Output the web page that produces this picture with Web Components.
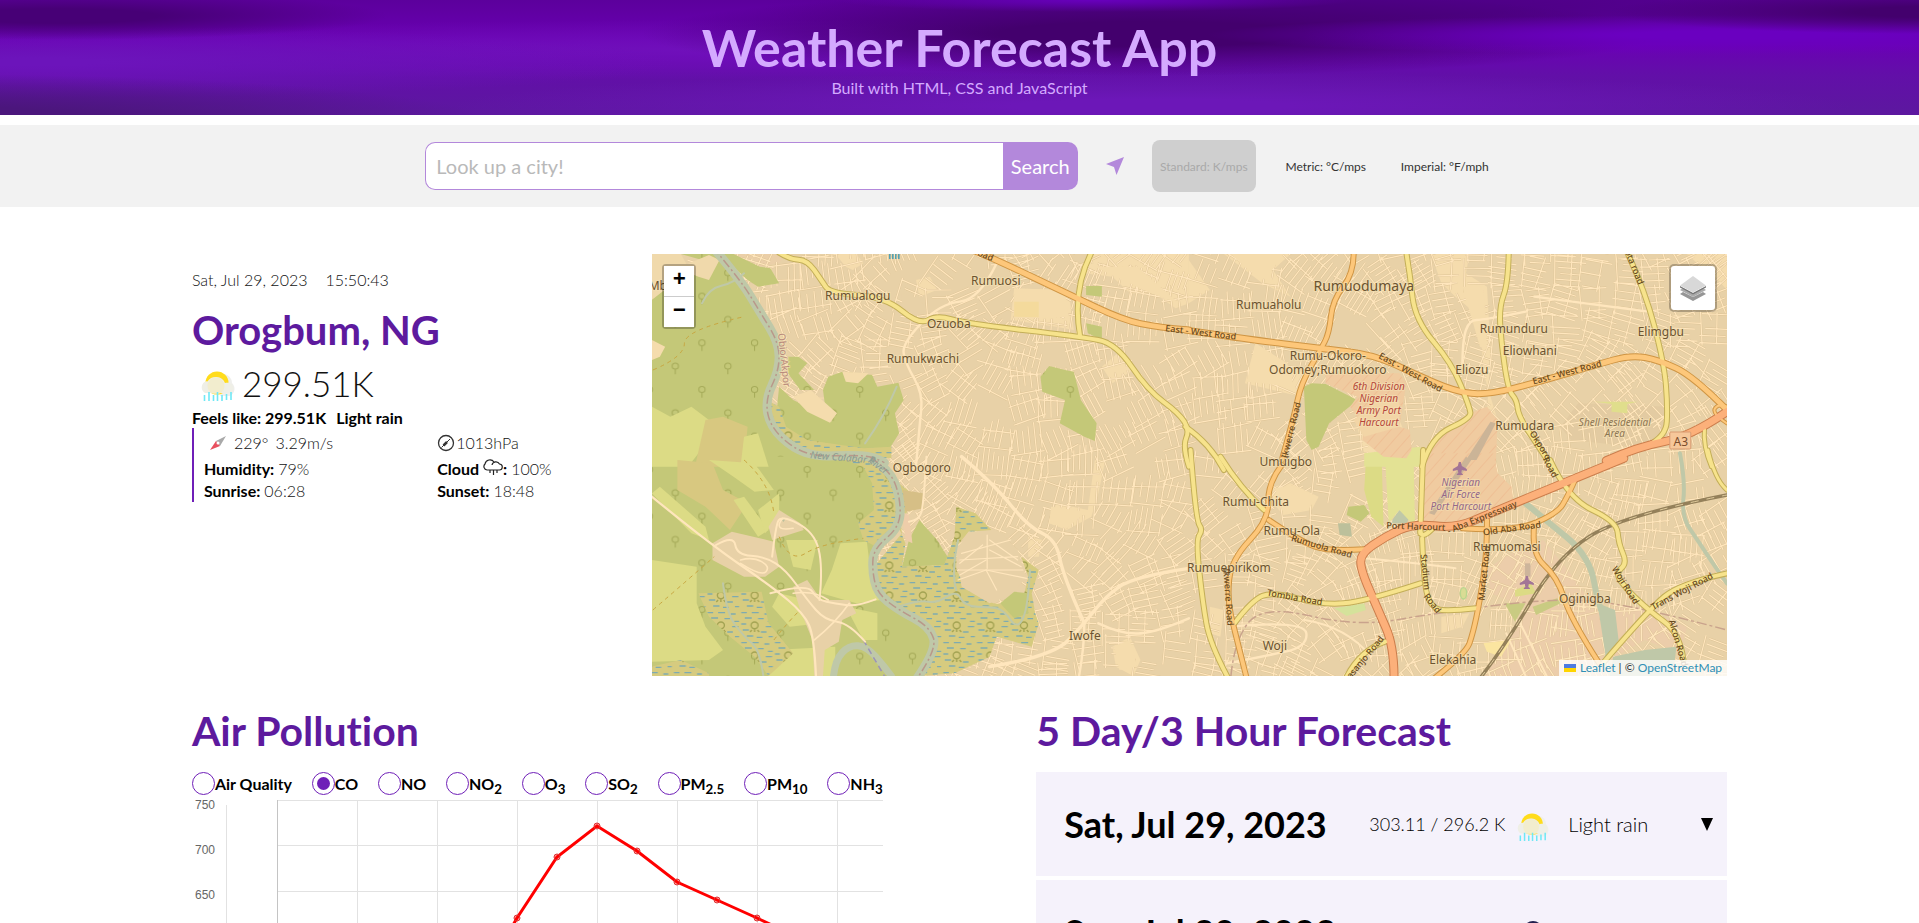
<!DOCTYPE html>
<html lang="en">
<head>
<meta charset="utf-8">
<title>Weather Forecast App</title>
<style>
  html, body { margin: 0; }
  body { font-family: Lato, "Open Sans", sans-serif; font-size: 16px; line-height: 20px; font-variant-ligatures: none; color: #000; background: #fff; }
</style>
</head>
<body>
<weather-app></weather-app>

<script>
const define = (name, html, setup) => {
  const template = document.createElement('template');
  template.innerHTML = html;
  customElements.define(name, class extends HTMLElement {
    constructor() {
      super();
      this.attachShadow({ mode: 'open' }).appendChild(template.content.cloneNode(true));
      if (setup) setup(this.shadowRoot, this);
    }
  });
};

/* ---------- header ---------- */
define('app-header', `
<style>
  :host {
    display: block; text-align: center; padding: 16px 0 17px; color: #d4aaff;
    background:
      radial-gradient(330px 24px at 3% 16px, #470076 30%, transparent),
      radial-gradient(560px 46px at -4% 120px, #4b167c 30%, transparent),
      radial-gradient(260px 12px at 57% 0px, #6800bd, transparent),
      radial-gradient(330px 22px at 101% 12px, #43006d 25%, transparent),
      radial-gradient(520px 20px at 90% 35px, #6a00c0 20%, transparent),
      radial-gradient(510px 42px at 60% 34px, #43006d 30%, transparent),
      radial-gradient(620px 40px at 72% 8px, #4e0086 20%, transparent),
      radial-gradient(640px 36px at 2% 62px, #6c14bb 10%, transparent),
      radial-gradient(800px 30px at 38% 50px, #7010bb, transparent),
      radial-gradient(700px 34px at 60% 106px, #6c17b8 20%, transparent),
      linear-gradient(#5c009c, #6a00b4 38%, #620fa8 65%, #5c189f);
  }
  h1 { margin: 0; font-size: 52px; line-height: 62px; font-weight: 700; }
  p { margin: 0; font-size: 16px; line-height: 20px; }
</style>
<h1><slot name="title"></slot></h1>
<p><slot></slot></p>`);

/* ---------- search bar ---------- */
define('search-bar', `
<style>
  :host { display: flex; justify-content: center; align-items: center; margin-top: 10px; padding: 15px 0; background: #f2f2f2; }
  form { display: flex; width: 34%; height: 48px; }
  input { flex: 1; min-width: 0; box-sizing: border-box; border: 1px solid #b388db; border-right: 0; border-radius: 10px 0 0 10px;
    padding: 0 10px; font: 400 20px Lato, sans-serif; background: #fff; outline: 0; }
  input::placeholder { color: #b9b9b9; opacity: 1; }
  button { font-family: Lato, sans-serif; border: 0; background: none; padding: 0; }
  .go { width: 75px; background: #b388db; color: #fff; font-size: 20px; border-radius: 0 10px 10px 0; }
  .here { width: 74px; height: 48px; display: grid; place-items: center; }
  .here svg { width: 18px; height: 18px; }
  .units { display: flex; gap: 24px; }
  .units button { height: 52px; min-width: 92px; padding: 0 5px; font-size: 12px; color: #333; border-radius: 8px; }
  .units button:disabled { background: #cfcfcf; color: #a9a9a9; min-width: 104px; }
</style>
<form onsubmit="return false">
  <input type="search" aria-label="City" placeholder="Look up a city!">
  <button class="go" type="submit">Search</button>
</form>
<button class="here" aria-label="Use my location"><svg viewBox="0 0 18 18"><path d="M18 0 10.500 18 8 10 0 7z" fill="#b388db"/></svg></button>
<div class="units">
  <button disabled>Standard: K/mps</button>
  <button>Metric: °C/mps</button>
  <button>Imperial: °F/mph</button>
</div>`);

/* ---------- weather icon ---------- */
define('rain-icon', `
<style>:host { display: block; width: 40px; height: 32px; flex: none; } svg { display: block; width: 100%; height: 100%; }</style>
<svg viewBox="0 0 40 32">
  <path d="M26 4a9 9 0 0 1 8 9 8 8 0 0 1-2 13H22z" fill="#efefec"/>
  <circle cx="19" cy="13" r="11.500" fill="#ffdc1c"/>
  <path d="M7 23a6.500 6.500 0 0 1-.5-11 5 5 0 0 1 3-.6A10 10 0 0 1 27 13c4-1 8 0 8.500 5 0 4-3 5-5.500 5z" fill="#efefe6"/>
  <circle cx="18" cy="16" r="8.500" fill="#f3ecc8" opacity=".8"/>
  <path d="M6.500 25v6M11 22v9M15.500 25v6M19.500 22v9M24 25v6M28.500 24v6M33 22v8" stroke="#6fe8f5" stroke-width="1.600"/>
</svg>`);

/* ---------- current weather ---------- */
define('current-weather', `
<style>
  :host { display: block; padding-top: 16px; font-weight: 300; color: #111; }
  .when { display: flex; gap: 18px; line-height: 20px; }
  h2 { margin: 15px 0 3px; font-size: 40px; line-height: 50px; font-weight: 700; color: #5d1a9e; }
  .temp { display: flex; align-items: center; gap: 4px; padding-left: 6px; font-size: 35px; line-height: 50px; }
  .temp rain-icon { margin-top: 6px; }
  b { font-weight: 700; color: #000; }
  .feels { display: flex; gap: 10px; font-weight: 700; color: #000; }
  .details { display: grid; grid-template-columns: 52% 48%; border-left: 2px solid #6f1fb8; line-height: 22px; padding-left: 10px; }
  .details > span { display: flex; align-items: center; gap: 4px; }
  .details > .first { height: 30px; }
  svg { flex: none; }
  .details > .press { gap: 1px; }
  .details > .wind { gap: 7px; padding-left: 5px; }
  .cloud b { display: flex; align-items: center; }
  .cloud svg { margin: -4px 0 0 4px; }
</style>
<div class="when"><span>Sat, Jul 29, 2023</span><span>15:50:43</span></div>
<h2>Orogbum, NG</h2>
<div class="temp"><rain-icon></rain-icon><span>299.51K</span></div>
<div class="feels"><span>Feels like: 299.51K</span><span>Light rain</span></div>
<div class="details">
  <span class="first wind">
    <svg width="18" height="16" viewBox="0 0 18 16"><path d="M17 1 7 6l4 5z" fill="#a9a9a9"/><path d="M1 15 7 6l4 5z" fill="#e8505e"/><circle cx="9" cy="8" r="1.500" fill="#fff"/></svg>
    <span>229°</span><span>3.29m/s</span></span>
  <span class="first press">
    <svg width="18" height="18" viewBox="0 0 18 18" fill="none" stroke="#333"><circle cx="9" cy="9" r="7.500" stroke-width="1.300"/><path d="M4.500 13.500 13 5" stroke-width="1"/><path d="M6.500 11.500 10 8" stroke-width="2.500"/></svg>
    <span>1013hPa</span></span>
  <span><b>Humidity:</b> 79%</span>
  <span class="cloud"><b>Cloud <svg width="20" height="18" viewBox="0 0 20 18" fill="none" stroke="#222" stroke-width="1.200"><path d="M5 12H4A3.500 3.500 0 0 1 2 6 5 5 0 0 1 11 4M4 12h12a3 3 0 0 0 .5-6A4 4 0 0 0 9 7M7 12v3M10.500 12v5M14 12v3"/></svg>:</b> 100%</span>
  <span><b>Sunrise:</b> 06:28</span>
  <span><b>Sunset:</b> 18:48</span>
</div>`);

/* ---------- map ---------- */
define('city-map', `
<style>
  :host { display: block; position: relative; height: 422px; overflow: hidden; background: #e8d1a7; }
  .canvas { display: block; width: 100%; height: 100%; font-family: "Noto Sans", sans-serif; }
  .zoom { position: absolute; left: 10px; top: 10px; display: grid; border: 2px solid rgba(0,0,0,.25); border-radius: 4px; background-clip: padding-box; }
  .zoom button { width: 30px; height: 30px; padding: 0; border: 0; background: #fff; font: 700 22px/30px "Liberation Mono", monospace; color: #000; }
  .zoom button + button { height: 31px; border-top: 1px solid #ccc; }
  .layers { position: absolute; right: 10px; top: 10px; width: 48px; height: 48px; padding: 0; border: 2px solid rgba(0,0,0,.25); border-radius: 5px; background: #fff; background-clip: padding-box; display: grid; place-items: center; }
  .credit { position: absolute; right: 0; bottom: 0; display: flex; align-items: center; gap: 4px; padding: 0 5px; background: rgba(255,255,255,.8); font-size: 12px; line-height: 16px; color: #333; }
  a { color: #2f8fb5; text-decoration: none; }
</style>
<svg class="canvas" viewBox="0 0 1075 422" preserveAspectRatio="xMidYMid slice" role="img" aria-label="Street map">
  <defs>
    <pattern id="trees" width="150" height="140" patternUnits="userSpaceOnUse" fill="none" stroke="#a5aa58" stroke-width="3">
      <circle cx="30" cy="28" r="9"/><path d="M30 37v16"/><circle cx="104" cy="98" r="9"/><path d="M104 107v16"/></pattern>
    <pattern id="marsh" width="96" height="90" patternUnits="userSpaceOnUse" fill="none" stroke="#7eabb0" stroke-width="4">
      <path d="M4 8h16M34 8h20M70 12h14M14 24h20M52 26h16M80 34h14M4 42h14M74 50h18M8 60h18M60 66h16M20 78h18M48 82h16M82 80h12"/>
      <g stroke="#a3a352" stroke-width="4"><circle cx="42" cy="46" r="10"/><path d="M42 56v10M34 60l-5 6M50 60l5 6"/></g></pattern>
    <pattern id="hatch" width="26" height="26" patternUnits="userSpaceOnUse" patternTransform="rotate(40)"><path d="M0 0v26" stroke="#eba680" stroke-width="2"/></pattern>
  </defs>
</svg>
<div class="zoom"><button aria-label="Zoom in">+</button><button aria-label="Zoom out">−</button></div>
<button class="layers" aria-label="Layers"><svg width="28" height="28" viewBox="0 0 28 28"><path d="M1 20l13 7 13-7-3-2-10 5-10-5z" fill="#969696"/><path d="M1 16l13 7 13-7-3-2-10 5-10-5z" fill="#aaa"/><path d="M1 12l13 7 13-7v1.500l-13 7-13-7z" fill="#777"/><path d="M14 2 1 11.500l13 7 13-7z" fill="#d8d8d8"/></svg></button>
<div class="credit"><svg width="12" height="8" viewBox="0 0 12 8"><path d="M0 0h12v4H0z" fill="#4c7be1"/><path d="M0 4h12v4H0z" fill="#ffd500"/></svg><span><a href="#leaflet">Leaflet</a> | © <a href="#osm">OpenStreetMap</a></span></div>`,
root => {
  const svg = root.querySelector('.canvas');
  const NS = 'http://www.w3.org/2000/svg';
  /* The map is digitised in four sheets: [x offset, y offset] of each on the canvas. */
  const sheet = { A: [-13, -14], B: [-13, 206], C: [537, -14], D: [537, 206] };
  const SX = 0.3508, SY = 1 / 3;
  const el = (name, attrs, text) => {
    const n = document.createElementNS(NS, name);
    for (const k in attrs) n.setAttribute(k, attrs[k]);
    if (text) n.textContent = text;
    svg.appendChild(n);
    return n;
  };
  const tf = s => `translate(${sheet[s]}) scale(${SX} ${SY})`;
  const area = (s, d, fill) => el('path', { d: 'M' + d + 'z', transform: tf(s), fill });
  /* Rounds the corners of a point list with quadratic midpoints. */
  const smooth = pts => {
    const p = pts.trim().split(' ').map(q => q.split(',').map(Number));
    let d = 'M' + p[0];
    for (let i = 1; i < p.length - 1; i++) {
      const end = i === p.length - 2 ? p[i + 1] : [(p[i][0] + p[i + 1][0]) / 2, (p[i][1] + p[i + 1][1]) / 2];
      d += `Q${p[i]} ${end}`;
    }
    if (p.length === 2) d += 'L' + p[1];
    return d;
  };
  const line = (s, pts, stroke, w, dash) => el('path', { d: smooth(pts), transform: tf(s), fill: 'none', stroke, 'stroke-width': w, 'vector-effect': 'non-scaling-stroke', 'stroke-linejoin': 'round', ...(dash ? { 'stroke-dasharray': dash } : { 'stroke-linecap': 'round' }) });

  /* open ground */
  const plain = '#f5dcad';
  [['A', '1290,42 1568,42 1568,190 1530,205 1470,160 1400,160 1350,110 1270,100'],
   ['A', '1070,145 1225,150 1240,270 1190,260 1060,240'], ['A', '1370,335 1410,390 1350,430 1320,380'],
   ['A', '610,90 640,70 620,42 560,42 590,80'], ['A', '790,120 830,110 850,150 800,170'],
   ['C', '100,42 290,42 240,90 290,170 210,130'], ['C', '690,42 800,42 790,100 850,140 860,330 850,520 880,540 840,400 830,230 760,170 720,130'],
   ['C', '190,310 290,380 330,400 320,470 160,430'], ['C', '0,60 60,150 0,190'], ['C', '1420,42 1534,42 1534,150 1500,110 1460,80'], ['C', '480,560 600,540 640,640 500,640'],
   ['B', '1300,0 1330,0 1310,100 1290,170 1220,210 1170,190 1190,130 1280,150'], ['B', '1350,560 1400,530 1430,600 1410,648 1360,620'], ['B', '1110,230 1150,240 1140,290 1110,290'],
   ['D', '240,80 290,70 370,110 350,150 270,165 240,130'], ['D', '60,440 100,450 90,530 60,520'], ['D', '720,470 800,460 780,500 720,520']
  ].forEach(([s, d]) => area(s, d, plain));
  area('A', '270,42 420,42 400,70 330,80', '#ebcfa8');
  area('D', '850,330 900,290 1010,240 1080,330 1190,490 1190,600 1180,648 840,648 960,440 860,400', '#eccdaa');
  area('D', '1210,440 1290,440 1420,500 1400,580 1300,540 1200,600 1190,470', '#eccdaa');
  area('C', '1110,490 1370,500 1360,590 1270,620 1090,600 1060,560', '#e3cba2');

  /* side streets: small grids whose bearing drifts over the town */
  let seed = 7;
  const rnd = () => (seed = (seed * 16807) % 2147483647) / 2147483647;
  let d = '';
  for (let y = -10; y < 440; y += 27) for (let x = 40; x < 1090; x += 30) {
    if (rnd() < 0.07) continue;
    const a = Math.sin(x / 130 + 1) + Math.cos(y / 90 + x / 300) + (rnd() - 0.5) * 0.5;
    const c = Math.cos(a), s = Math.sin(a), cx = x + rnd() * 8, cy = y + rnd() * 8;
    const seg = (u1, v1, u2, v2) => { d += `M${(cx + u1 * c - v1 * s).toFixed(1)} ${(cy + u1 * s + v1 * c).toFixed(1)}L${(cx + u2 * c - v2 * s).toFixed(1)} ${(cy + u2 * s + v2 * c).toFixed(1)}`; };
    const gap = 5 + rnd() * 3;
    for (let v = -15; v < 16; v += gap) if (rnd() < 0.88) seg(-16 + rnd() * 10, v, 18 - rnd() * 12, v);
    seg(-14, -17, -13 + rnd() * 3, 17);
    if (rnd() < 0.7) seg(2 + rnd() * 6, -17, 3 + rnd() * 4, 15);
  }
  el('path', { d, fill: 'none', stroke: '#dcc294', 'stroke-width': 2 });
  el('path', { d, fill: 'none', stroke: '#ffe6bd', 'stroke-width': 1.2 });

  /* blocks with few streets */
  [['A', '1300,80 1420,80 1540,190 1460,160'], ['A', '1070,145 1215,150 1225,230 1070,235'], ['C', '780,140 840,140 850,330 830,320'],
   ['C', '190,310 280,370 300,440 165,425'], ['B', '1175,140 1275,155 1220,205 1170,190'], ['D', '245,85 300,75 365,110 340,150 270,160'], ['B', '1355,560 1400,540 1420,620 1370,630'], ['C', '120,42 270,42 230,100 240,130 170,90']
  ].forEach(([s, p]) => area(s, p, plain));
  area('A', '750,160 800,175 820,210 790,230 750,200', '#e8d1a7');

  /* woods west of the river and around it */
  const wood = '#c4c878', field = '#dcdb85', marsh = '#d6cb7f';
  const woods = (s, p) => { area(s, p, wood); area(s, p, 'url(#trees)'); };
  const wet = (s, p) => { area(s, p, marsh); area(s, p, 'url(#marsh)'); };
  area('A', '37,42 120,42 150,100 100,130 37,190', '#f0d9ab');
  woods('A', '37,180 110,120 180,60 120,42 232,42 300,130 390,290 395,380 365,480 400,590 480,640 690,650 690,680 37,680');
  woods('A', '230,42 270,42 345,80 375,85 400,130 340,140 310,120');
  woods('B', '37,-10 690,-10 740,120 740,210 680,270 665,330 700,420 820,500 840,560 800,648 37,648');
  area('A', '110,85 200,45 230,60 200,120 170,110', '#f0d9ab');
  area('A', '37,300 75,320 60,350 37,360', plain);
  woods('A', '400,440 440,480 480,500 550,545 530,490 525,450 540,410 580,395 665,405 680,440 740,428 755,480 730,520 742,580 700,650 560,640 460,610 390,540');
  area('A', '440,470 490,450 565,520 545,548 480,515', plain);
  area('A', '580,395 655,400 625,430 590,425', plain);
  woods('A', '425,350 455,350 480,370 455,400 500,450 460,450 425,400');
  woods('A', '1145,410 1170,378 1215,390 1240,395 1260,480 1305,550 1300,603 1270,590 1200,550 1215,480 1150,455');
  area('A', '1275,138 1320,138 1320,170 1275,165', wood);
  area('A', '1275,250 1320,260 1320,300 1280,280', wood);
  area('A', '1070,185 1140,185 1140,232 1070,230', '#f4da9c');
  area('A', '37,500 90,530 150,500 200,540 200,600 140,680 37,680', field);
  area('A', '190,540 240,530 310,560 300,680 160,680', '#d8c880');
  area('A', '300,590 340,580 370,680 290,680', field);
  wet('A', '365,480 400,500 420,560 480,600 640,625 720,620 720,655 600,650 480,640 400,590 370,530');
  area('B', '110,0 210,10 240,90 310,130 260,210 190,140 110,90', '#d8c880');
  area('B', '200,0 330,10 385,90 330,95 270,50', field);
  area('B', '37,100 60,80 190,200 200,240 150,220', field);
  area('B', '270,120 300,110 370,210 340,230', field);
  area('B', '550,330 575,250 650,245 660,330 690,420 620,430 520,400', field);
  area('B', '340,150 400,100 400,170 360,220', field);
  area('B', '37,300 165,320 165,430 190,500 240,570 200,600 37,605', field);
  area('B', '400,400 480,420 520,490 430,500 380,440', field);
  area('B', '380,570 560,560 560,648 370,648', field);
  area('B', '590,440 680,460 680,540 640,540', field);
  area('B', '420,240 510,240 490,330 440,320', field);
  wet('B', '170,400 350,395 370,490 440,580 370,648 330,590 260,530 200,470');
  wet('B', '37,620 120,600 200,640 200,648 37,648');
  wet('B', '560,-10 690,-5 745,110 740,200 680,262 640,240 625,190 670,150 665,70 640,20');
  area('B', '400,150 460,190 470,210 380,240 370,200', '#e8d1a7');
  area('B', '210,250 265,215 385,245 400,320 360,350 300,350 210,300', '#e8d1a7');
  area('B', '440,380 480,360 520,420 600,420 620,460 580,480 570,545 530,570 525,648 500,648 495,540 460,450', '#e8d1a7');

  /* marsh east of the river */
  wet('B', '730,60 790,110 740,200 760,250 750,320 870,315 900,230 905,140 960,160 1005,210 940,215 905,260 905,330 940,390 1010,430 1090,440 1110,350 1090,290 1140,330 1120,400 1130,460 1140,490 1120,560 1020,530 1000,590 900,640 800,648 835,560 820,500 690,400 670,320 750,220');
  woods('B', '770,240 800,180 850,240 880,290 870,315 750,320');
  area('B', '1030,430 1070,395 1110,400 1110,460 1070,475', wood);
  area('B', '752,90 810,100 812,145 760,155', '#d6bf86');
  area('B', '750,155 770,165 780,250 760,240', '#eecdaa');
  const blk = (s, p) => area(s, p, '#e8d1a7');
  blk('B', '905,270 940,215 1030,215 1080,270 1105,355 1050,410 1000,430 920,380');
  [['920,280', '1060,240'], ['915,300', '1080,290'], ['910,330', '1095,330'], ['910,360', '990,330'], ['990,330', '1020,390'], ['993,225', '993,325'], ['990,330', '1105,355'], ['915,310', '980,255'], ['1000,240', '1080,300'], ['1000,270', '1090,320'], ['915,345', '990,300']].forEach(q => line('B', q.join(' '), '#ffe6bd', 1.2));

  /* river */
  const river = '#bfc8a8';
  ['B|555,648 560,600 600,555 650,560 700,620 720,648', 'B|240,370 250,460 300,530 345,570 355,648', 'B|740,440 800,420 850,430 905,390 930,440 1000,440 1040,450 1080,510 1110,440 1115,330',
   'A|180,190 200,145 270,130 300,100', 'A|735,440 700,530 645,610'].forEach((q, i) => { const [s, p] = q.split('|'); line(s, p, river, i ? 2 : 7); });
  line('B', '905,390 890,340 910,240', river, 2);
  const banks = [['A', '210,20 290,120 345,215 400,310 400,390 360,480 375,560 440,625 510,650 600,645 670,650 700,668'], ['B', '660,-8 715,30 745,110 745,200 670,265 665,330 680,400 740,450 830,500 850,570 790,660']];
  banks.forEach(([s, p]) => line(s, p, river, 9));
  banks.forEach(([s, p]) => line(s, p, '#b9988a', 1.5, '9 3 2 3'));
  line('B', '640,540 700,648', '#9c93b8', 1.5, '6 4');
  line('D', '1400,-20 1415,60 1405,170 1450,240 1500,320 1534,370', river, 4);
  line('D', '960,130 1040,200 1110,260 1150,330 1160,400 1185,480 1210,560 1190,600', river, 6);
  area('D', '1165,430 1215,450 1225,540 1190,600', river);
  area('D', '1210,590 1300,570 1390,560 1380,648 1200,648', river);
  area('D', '580,180 600,150 635,165 620,190 580,190', river);
  area('D', '425,190 460,190 465,230 430,225', '#bcc09b');
  area('B', '405,175 418,178 412,186', '#bcc09b');

  /* green and special ground in the east */
  area('C', '328,440 350,430 390,432 480,480 470,490 400,550 370,620 350,630 335,600', wood);
  area('D', '455,140 500,135 515,160 490,185 450,165', wood);
  area('D', '505,0 550,0 555,200 520,170 500,90', field);
  area('D', '558,-30 640,-30 645,200 600,150 570,190', '#e3e294');
  area('C', '500,640 660,620 660,680 500,680', '#e3e294');
  area('C', '1155,485 1280,485 1250,492 1250,520 1205,515 1205,492', '#e0de8c');
  area('D', '415,445 500,430 505,450 450,468', '#d5e29b');
  area('D', '930,390 975,370 990,400 930,410', field);
  area('D', '900,430 960,430 930,485', '#c9cb82');
  area('D', '980,440 1050,415 1060,430 990,465', '#c9cb82');
  area('D', '840,550 920,540 890,590 850,575', '#fbe5a0');
  const base = (s, p) => { area(s, p, '#f0cba0'); area(s, p, 'url(#hatch)'); };
  base('C', '390,400 600,400 620,430 600,560 630,570 635,630 620,655 555,650 495,600 500,560 460,500 480,470 390,430');
  area('C', '540,480 600,480 600,560 500,590 470,540', '#f2d5a6');
  base('C', '800,520 850,500 880,540 875,680 670,680 690,600');
  base('D', '672,-20 868,-20 880,40 920,80 925,130 750,190 668,200');
  area('C', '790,660 860,545 875,550 820,660', '#cbb497');
  area('D', '685,160 790,-10 805,0 700,165', '#cbb497');
  area('D', '958,310 974,310 974,350 958,350', '#cdb59b');
  el('ellipse', { cx: 783, cy: 400, rx: 9, ry: 17, transform: tf('D'), fill: '#d9dc94', stroke: '#b8d58e', 'stroke-width': 4 });

  /* lesser roads */
  [['A', '1020,70 970,180 860,190 750,310 760,370 810,460 800,560 790,680', 2.4], ['B', '820,-10 812,130 800,180 770,185', 2], ['B', '920,-10 1010,70 1110,200 1190,240 1210,350 1270,490', 3.4],
   ['B', '1000,620 1180,590 1270,490 1330,410 1410,350 1568,325', 3.4], ['B', '1310,490 1380,525 1480,515 1568,475', 2.6], ['B', '1270,490 1270,560 1255,648', 2.4],
   ['B', '37,110 200,250 380,380 470,460 500,530 505,648', 2.2], ['B', '220,255 270,225 280,285 360,290 420,330 480,420 530,480 600,490 645,545', 2], ['B', '380,290 390,200 405,165 500,215 525,320 515,420', 2],
   ['B', '375,400 480,370 510,420 560,430 620,440 675,418', 2], ['B', '410,175 380,215 440,205', 1.6], ['B', '290,300 325,290 375,320 350,350 290,310', 1.6], ['B', '440,400 500,390 540,420', 1.6], ['B', '500,540 560,490 600,430', 1.6],
   ['C', '780,380 780,300 800,240 840,240 960,215', 2.4], ['C', '985,170 1130,190 1310,215', 2.4], ['D', '500,295 660,310 760,325', 2], ['D', '120,500 330,480 340,560 210,590 110,610', 2.4], ['D', '330,480 450,500 520,590', 2], ['D', '905,520 960,648', 2], ['D', '940,480 1020,648', 2]
  ].forEach(([s, p, w]) => line(s, p, '#ffe6bd', w));
  line('D', '120,648 130,540 210,435 480,500 700,460 1030,415 1250,430 1534,510', '#c9a38c', 1.5, '10 3 3 3');
  line('B', '40,450 150,350 215,290', '#c8a640', 1, '4 4');
  line('A', '40,390 130,350 130,270 300,230', '#c8a640', 1, '4 4');
  line('B', '300,0 375,70 385,160', '#c8a640', 1, '4 4');
  line('B', '400,230 430,310 520,250 640,235', '#c8a640', 1, '4 4');
  line('B', '385,540 430,480 460,450', '#c8a640', 1, '4 4');

  /* railway */
  line('D', '830,655 900,560 1050,290 1240,165 1534,105', '#94805a', 3.5);
  line('D', '830,655 900,560 1050,290 1240,165 1534,105', '#e0cb9c', 1, '8 8');

  /* classified roads: casing first, then surface */
  const Y = '#f7e38c', Yc = '#c3ae58', O = '#fdc77a', Oc = '#cf9544', R = '#fcb07a', Rc = '#cb7d4c';
  const roads = [
    ['A', '400,38 430,58 480,60 520,120 545,160 700,170 800,255 850,225 930,250 1260,290 1360,310 1450,450 1540,520 1570,570 1550,620 1568,680', 5, Y, Yc],
    ['A', '1290,38 1235,150 1258,290', 5, Y, Yc],
    ['C', '620,38 630,100 645,240 750,370 800,500 805,535 690,590 665,680', 5, Y, Yc], ['D', '668,-30 660,220', 5, Y, Yc],
    ['C', '912,38 910,130 885,200 890,300 910,450 935,480 940,530 1010,640 1040,690', 5, Y, Yc],
    ['D', '1030,0 1080,115 1220,185 1225,250 1250,310 1215,340 1250,390 1310,450 1400,520 1410,600', 5, Y, Yc],
    ['C', '1250,38 1300,150 1355,370 1365,500 1360,590 1310,615', 5, Y, Yc],
    ['C', '-10,560 60,610 100,690', 5, Y, Yc], ['D', '90,-10 150,90 215,150', 5, Y, Yc],
    ['D', '5,-30 20,180 40,210 20,240 40,430 60,550 110,650', 5, Y, Yc],
    ['D', '130,490 180,420 240,395 380,435 500,425 660,370', 5, Y, Yc], ['D', '665,235 670,370 690,440 730,455 820,445', 5, Y, Yc], ['D', '660,215 665,240 700,200', 5, Y, Yc],
    ['D', '450,650 490,570 560,545', 5, Y, Yc], ['D', '1180,610 1310,450 1400,370 1534,340', 5, Y, Yc], ['D', '1480,-30 1500,60 1534,90', 4, Y, Yc], ['C', '1470,560 1465,620 1490,680', 4, Y, Yc],
    ['A', '960,34 1010,55 1220,160 1380,240 1480,262 1568,270', 6, O, Oc],
    ['C', '-10,270 180,300 380,325 530,345 640,400 760,455 850,465 1000,425 1160,375 1260,345 1340,360 1440,410 1534,510', 6, O, Oc],
    ['C', '470,38 470,100 410,180 400,280 375,330 320,430 300,530 265,660', 5, O, Oc],
    ['D', '265,15 225,70 228,180 120,300 110,420 130,510 165,655', 5, O, Oc],
    ['D', '228,180 320,245 400,275 500,268', 5, O, Oc],
    ['D', '780,205 930,215 1050,160 1080,110 1105,50', 5, O, Oc], ['D', '850,180 850,280 830,420 810,520 790,580 700,655', 5, O, Oc],
    ['D', '985,190 975,280 1050,350 1090,480 1170,610', 5, O, Oc],
    ['C', '1534,500 1510,490 1490,520 1534,550', 3, O, Oc],
    ['C', '1534,515 1430,590 1280,620 1190,662', 8, R, Rc],
    ['D', '1240,-5 1100,55 860,160 760,205 640,190 560,230 490,280 490,330 540,450 585,560 585,655', 8, R, Rc]
  ];
  roads.forEach(([s, p, w, , c]) => line(s, p, c, w + 1));
  roads.forEach(([s, p, w, c]) => line(s, p, c, w - 1));

  /* road shield and aircraft */
  el('rect', { x: 1018, y: 178, width: 21, height: 17, rx: 1, fill: '#f6c79a', stroke: '#d89a70' });
  const plane = 'M-1-6h2l1 4 5 3v2l-5-1-.5 3 1.500 1v1h-6v-1l1.500-1-.5-3-5 1v-2l5-3z';
  el('path', { d: plane, transform: 'translate(808 214)', fill: '#a27596' });
  el('path', { d: plane, transform: 'translate(875 328)', fill: '#a27596' });

  /* names */
  const name = (s, x, y, text, o = {}) => {
    const px = Math.round(sheet[s][0] + x * SX) + 1, py = Math.round(sheet[s][1] + y * SY);
    el('text', { x: px, y: py, 'text-anchor': 'middle', 'dominant-baseline': 'central', 'font-size': o.size || 12, fill: o.fill || '#6b5330',
      'font-style': o.style || 'normal', 'font-weight': o.weight || 400, stroke: o.halo || 'rgba(245,225,180,.6)', 'stroke-width': 2, 'paint-order': 'stroke',
      ...(o.rot ? { transform: `rotate(${o.rot} ${px} ${py})` } : {}) }, text);
  };
  [['A', 52, 135, 'Mb'], ['A', 622, 165, 'Rumualogu'], ['A', 1015, 121, 'Rumuosi'], ['A', 880, 248, 'Ozuoba'], ['A', 806, 353, 'Rumukwachi'], ['B', 805, 22, 'Ogbogoro'], ['B', 1268, 526, 'Iwofe'],
   ['C', 225, 193, 'Rumuaholu'], ['C', 924, 263, 'Rumunduru'], ['C', 970, 330, 'Eliowhani'], ['C', 1344, 273, 'Elimgbu'], ['C', 803, 387, 'Eliozu'], ['C', 392, 345, 'Rumu-Okoro-'], ['C', 392, 387, 'Odomey;Rumuokoro'],
   ['C', 956, 556, 'Rumudara'], ['C', 274, 662, 'Umuigbo'], ['D', 187, 123, 'Rumu-Chita'], ['D', 291, 211, 'Rumu-Ola'], ['D', 110, 322, 'Rumuepirikom'], ['D', 903, 258, 'Rumuomasi'], ['D', 1125, 415, 'Oginigba'], ['D', 749, 597, 'Elekahia'], ['D', 243, 555, 'Woji']
  ].forEach(q => name(...q));
  name('C', 495, 134, 'Rumuodumaya', { size: 14 });
  name('C', 1399, 604, 'A3', { halo: 'none', fill: '#7a4c2c' });
  const red = { fill: '#b5453a', style: 'italic', size: 10 };
  ['6th Division', 'Nigerian', 'Army Port', 'Harcourt'].forEach((t, i) => name('C', 538, 438 + i * 36, t, red));
  const air = { fill: '#94688a', style: 'italic', size: 10 };
  ['Nigerian', 'Air Force', 'Port Harcourt'].forEach((t, i) => name('D', 773, 67 + i * 36, t, air));
  const res = { fill: '#8d7653', style: 'italic', size: 10 };
  name('C', 1212, 545, 'Shell Residential', res); name('C', 1212, 580, 'Area', res);
  name('A', 412, 360, 'Obio/Akpor', { fill: '#b98a7c', size: 10, rot: 84 });
  name('A', 580, 650, 'New Calabar R', { fill: '#8c9c90', style: 'italic', size: 10, rot: 5, halo: 'none' });
  name('B', 680, 14, 'River', { fill: '#8c9c90', style: 'italic', size: 10, rot: 36, halo: 'none' });
  const way = (s, x, y, t, rot) => name(s, x, y, t, { size: 9, rot, fill: '#66481c', halo: 'none', weight: 500 });
  way('C', 30, 276, 'East - West Road', 7); way('C', 630, 397, 'East - West Road', 29); way('C', 1074, 397, 'East - West Road', -15);
  way('C', 287, 570, 'Ikwerre Road', -76); way('D', 376, 257, 'Rumuola Road', 16); way('D', 300, 410, 'Tombia Road', 10); way('D', 112, 410, 'Ikwerre Road', 86);
  way('D', 674, 335, 'Stadium', 84); way('D', 694, 428, 'Road', 52); way('D', 838, 340, 'Market Road', -84);
  way('D', 645, 199, 'Port Harcourt', 2); way('D', 832, 172, '- Aba Expressway', -22); way('D', 917, 205, 'Old Aba Road', -8);
  way('D', 1243, 375, 'Woji Road', 58); way('D', 1402, 393, 'Trans Woji Road', -28); way('D', 1395, 550, 'Alcon Road', 74); way('D', 500, 590, 'asanjo Road', -50);
  way('C', 1268, 82, 'ota road', 68); way('C', 1000, 615, 'Okporo', 58); way('D', 1030, 20, 'Road', 62); way('A', 985, 45, 'oad', 22);
  el('path', { d: 'M238 0v5M241 0v5M244 0v5M247 0v5', stroke: '#4a9fb5', 'stroke-width': 1.5, fill: 'none' });
});

/* ---------- air pollution ---------- */
define('gas-option', `
<style>
  :host { display: block; font-weight: 700; }
  label { display: flex; align-items: center; }
  input { appearance: none; margin: 0; width: 23px; height: 23px; box-sizing: border-box; border: 1px solid #6f1fb8; border-radius: 50%; padding: 4px; background: #fff content-box; }
  input:checked { background: #6f1fb8 content-box; }
  span { line-height: 22px; }
  ::slotted(sub) { line-height: 0; }
</style>
<label><input type="radio"><span><slot></slot></span></label>`,
(root, host) => {
  const input = root.querySelector('input');
  queueMicrotask(() => { input.checked = host.hasAttribute('selected'); });
});

define('air-pollution', `
<style>
  :host { display: block; overflow: hidden; }
  .gases { display: flex; justify-content: space-between; height: 23px; }
  svg { display: block; margin-top: 4px; font: 12px "Liberation Sans", Arial, sans-serif; fill: #666; }
</style>
<div class="gases" role="radiogroup" aria-label="Pollutant">
  <gas-option>Air Quality</gas-option><gas-option selected>CO</gas-option><gas-option>NO</gas-option><gas-option>NO<sub>2</sub></gas-option><gas-option>O<sub>3</sub></gas-option><gas-option>SO<sub>2</sub></gas-option><gas-option>PM<sub>2.5</sub></gas-option><gas-option>PM<sub>10</sub></gas-option><gas-option>NH<sub>3</sub></gas-option>
</div>
<svg width="691" height="300" viewBox="0 0 691 300" role="img" aria-label="CO concentration">
  <text x="23" y="10" text-anchor="end">750</text><text x="23" y="55" text-anchor="end">700</text><text x="23" y="100" text-anchor="end">650</text>
  <g fill="none" stroke="#e2e2e2">
    <path d="M34.500 6v294M165.500 1v300M245.500 1v300M325.500 1v300M405.500 1v300M485.500 1v300M565.500 1v300M645.500 1v300M86 1.500h605M86 46.500h605M86 92.500h605M86 138.500h605"/>
    <path d="M85.500 1v300" stroke="#c4c4c4"/>
  </g>
  <path d="M285 190 325 119 365 58 405 27 445 52 485 83 525 101 565 119 605 138" fill="none" stroke="#f00" stroke-width="3"/>
  <g fill="rgba(255,0,0,.4)" stroke="#d33"><circle cx="325" cy="119" r="3"/><circle cx="365" cy="58" r="3"/><circle cx="405" cy="27" r="3"/><circle cx="445" cy="52" r="3"/><circle cx="485" cy="83" r="3"/><circle cx="525" cy="101" r="3"/><circle cx="565" cy="119" r="3"/></g>
</svg>`);

/* ---------- forecast ---------- */
define('forecast-day', `
<style>
  :host { display: block; background: #f5f2fb; }
  summary { display: grid; grid-template-columns: 305px 145px 54px 1fr auto; align-items: center; height: 104px; padding: 0 14px 0 28px; list-style: none; font-weight: 300; font-size: 18px; }
  strong { font-size: 36px; line-height: 44px; font-weight: 700; }
  svg { display: block; width: 12px; height: 13px; }
  .sky { font-size: 20px; }
</style>
<details><summary><strong><slot name="date"></slot></strong><span><slot name="range"></slot></span><slot name="icon"></slot><span class="sky"><slot name="sky"></slot></span><svg viewBox="0 0 12 13"><path d="M0 0h12L6 13z"/></svg></summary></details>`);

/* ---------- page ---------- */
define('weather-app', `
<style>
  :host { display: block; height: 100vh; overflow-y: auto; scrollbar-width: none; }
  main { width: 80%; margin: 47px auto 0; }
  .now { display: grid; grid-template-columns: 3fr 7fr; }
  .more { display: flex; justify-content: space-between; margin-top: 30px; }
  section { width: 45%; }
  h2 { margin: 0 0 16px; font-size: 41px; line-height: 50px; font-weight: 700; color: #5d1a9e; }
  forecast-day { margin-bottom: 4px; }
  rain-icon { width: 38px; height: 30px; margin-top: 6px; }
  .cloud { width: 40px; height: 30px; display: block; }
</style>
<app-header><span slot="title">Weather Forecast App</span>Built with HTML, CSS and JavaScript</app-header>
<search-bar></search-bar>
<main>
  <div class="now"><current-weather></current-weather><city-map></city-map></div>
  <div class="more">
    <section><h2>Air Pollution</h2><air-pollution></air-pollution></section>
    <section><h2>5 Day/3 Hour Forecast</h2>
      <forecast-day><span slot="date">Sat, Jul 29, 2023</span><span slot="range">303.11 / 296.2 K</span><rain-icon slot="icon"></rain-icon><span slot="sky">Light rain</span></forecast-day>
      <forecast-day><span slot="date">Sun, Jul 30, 2023</span><span slot="range">301.5 / 296.4 K</span>
        <svg slot="icon" class="cloud" viewBox="0 0 40 30"><path d="M8 28a7 7 0 0 1 1-14 10 10 0 0 1 20 0 7 7 0 0 1 1 14z" fill="#221f4e"/></svg><span slot="sky">Light rain</span></forecast-day>
    </section>
  </div>
</main>`);
</script>
</body>
</html>
